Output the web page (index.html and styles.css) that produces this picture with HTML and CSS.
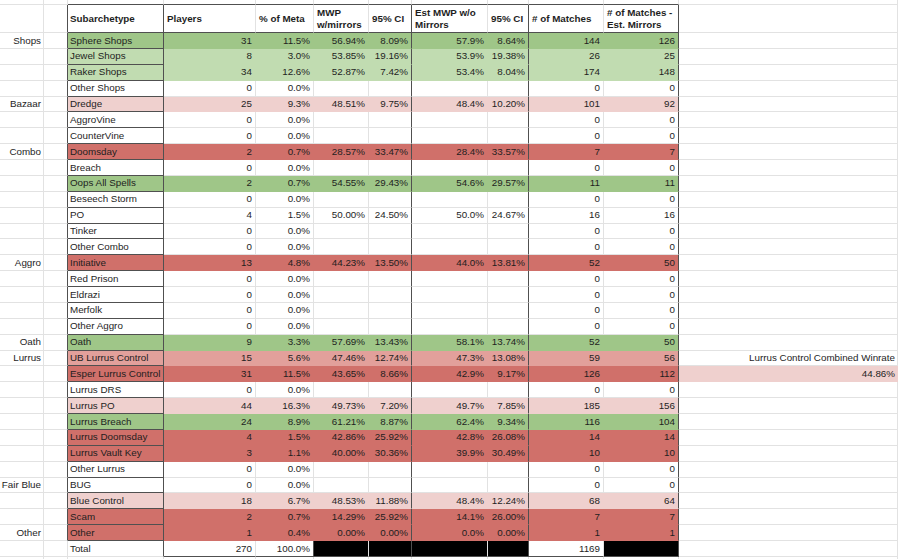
FILE: index.html
```html
<!DOCTYPE html>
<html>
<head>
<meta charset="utf-8">
<title>Subarchetype metagame</title>
<link rel="stylesheet" href="styles.css">
</head>
<body>
<div class="sheet">
  <div class="row top"><div></div><div></div><div></div><div></div><div></div><div></div><div></div><div></div><div></div><div></div><div></div><div></div><div></div></div>
  <div class="row hd"><div></div><div></div><div>Subarchetype</div><div>Players</div><div>% of Meta</div><div>MWP<br>w/mirrors</div><div>95% CI</div><div>Est MWP w/o<br>Mirrors</div><div>95% CI</div><div># of Matches</div><div># of Matches -<br>Est. Mirrors</div><div></div><div></div></div>

  <div class="row d fill green"><div>Shops</div><div></div><div>Sphere Shops</div><div>31</div><div>11.5%</div><div>56.94%</div><div>8.09%</div><div>57.9%</div><div>8.64%</div><div>144</div><div>126</div><div></div><div></div></div>
  <div class="row d fill lgreen"><div></div><div></div><div>Jewel Shops</div><div>8</div><div>3.0%</div><div>53.85%</div><div>19.16%</div><div>53.9%</div><div>19.38%</div><div>26</div><div>25</div><div></div><div></div></div>
  <div class="row d fill lgreen"><div></div><div></div><div>Raker Shops</div><div>34</div><div>12.6%</div><div>52.87%</div><div>7.42%</div><div>53.4%</div><div>8.04%</div><div>174</div><div>148</div><div></div><div></div></div>
  <div class="row d"><div></div><div></div><div>Other Shops</div><div>0</div><div>0.0%</div><div></div><div></div><div></div><div></div><div>0</div><div>0</div><div></div><div></div></div>
  <div class="row d fill lpink"><div>Bazaar</div><div></div><div>Dredge</div><div>25</div><div>9.3%</div><div>48.51%</div><div>9.75%</div><div>48.4%</div><div>10.20%</div><div>101</div><div>92</div><div></div><div></div></div>
  <div class="row d"><div></div><div></div><div>AggroVine</div><div>0</div><div>0.0%</div><div></div><div></div><div></div><div></div><div>0</div><div>0</div><div></div><div></div></div>
  <div class="row d"><div></div><div></div><div>CounterVine</div><div>0</div><div>0.0%</div><div></div><div></div><div></div><div></div><div>0</div><div>0</div><div></div><div></div></div>
  <div class="row d fill red"><div>Combo</div><div></div><div>Doomsday</div><div>2</div><div>0.7%</div><div>28.57%</div><div>33.47%</div><div>28.4%</div><div>33.57%</div><div>7</div><div>7</div><div></div><div></div></div>
  <div class="row d"><div></div><div></div><div>Breach</div><div>0</div><div>0.0%</div><div></div><div></div><div></div><div></div><div>0</div><div>0</div><div></div><div></div></div>
  <div class="row d fill green"><div></div><div></div><div>Oops All Spells</div><div>2</div><div>0.7%</div><div>54.55%</div><div>29.43%</div><div>54.6%</div><div>29.57%</div><div>11</div><div>11</div><div></div><div></div></div>
  <div class="row d"><div></div><div></div><div>Beseech Storm</div><div>0</div><div>0.0%</div><div></div><div></div><div></div><div></div><div>0</div><div>0</div><div></div><div></div></div>
  <div class="row d"><div></div><div></div><div>PO</div><div>4</div><div>1.5%</div><div>50.00%</div><div>24.50%</div><div>50.0%</div><div>24.67%</div><div>16</div><div>16</div><div></div><div></div></div>
  <div class="row d"><div></div><div></div><div>Tinker</div><div>0</div><div>0.0%</div><div></div><div></div><div></div><div></div><div>0</div><div>0</div><div></div><div></div></div>
  <div class="row d"><div></div><div></div><div>Other Combo</div><div>0</div><div>0.0%</div><div></div><div></div><div></div><div></div><div>0</div><div>0</div><div></div><div></div></div>
  <div class="row d fill red"><div>Aggro</div><div></div><div>Initiative</div><div>13</div><div>4.8%</div><div>44.23%</div><div>13.50%</div><div>44.0%</div><div>13.81%</div><div>52</div><div>50</div><div></div><div></div></div>
  <div class="row d"><div></div><div></div><div>Red Prison</div><div>0</div><div>0.0%</div><div></div><div></div><div></div><div></div><div>0</div><div>0</div><div></div><div></div></div>
  <div class="row d"><div></div><div></div><div>Eldrazi</div><div>0</div><div>0.0%</div><div></div><div></div><div></div><div></div><div>0</div><div>0</div><div></div><div></div></div>
  <div class="row d"><div></div><div></div><div>Merfolk</div><div>0</div><div>0.0%</div><div></div><div></div><div></div><div></div><div>0</div><div>0</div><div></div><div></div></div>
  <div class="row d"><div></div><div></div><div>Other Aggro</div><div>0</div><div>0.0%</div><div></div><div></div><div></div><div></div><div>0</div><div>0</div><div></div><div></div></div>
  <div class="row d fill green"><div>Oath</div><div></div><div>Oath</div><div>9</div><div>3.3%</div><div>57.69%</div><div>13.43%</div><div>58.1%</div><div>13.74%</div><div>52</div><div>50</div><div></div><div></div></div>
  <div class="row d fill mpink"><div>Lurrus</div><div></div><div>UB Lurrus Control</div><div>15</div><div>5.6%</div><div>47.46%</div><div>12.74%</div><div>47.3%</div><div>13.08%</div><div>59</div><div>56</div><div>Lurrus Control Combined Winrate</div><div></div></div>
  <div class="row d fill red"><div></div><div></div><div>Esper Lurrus Control</div><div>31</div><div>11.5%</div><div>43.65%</div><div>8.66%</div><div>42.9%</div><div>9.17%</div><div>126</div><div>112</div><div class="note">44.86%</div><div></div></div>
  <div class="row d"><div></div><div></div><div>Lurrus DRS</div><div>0</div><div>0.0%</div><div></div><div></div><div></div><div></div><div>0</div><div>0</div><div></div><div></div></div>
  <div class="row d fill lpink"><div></div><div></div><div>Lurrus PO</div><div>44</div><div>16.3%</div><div>49.73%</div><div>7.20%</div><div>49.7%</div><div>7.85%</div><div>185</div><div>156</div><div></div><div></div></div>
  <div class="row d fill green"><div></div><div></div><div>Lurrus Breach</div><div>24</div><div>8.9%</div><div>61.21%</div><div>8.87%</div><div>62.4%</div><div>9.34%</div><div>116</div><div>104</div><div></div><div></div></div>
  <div class="row d fill red"><div></div><div></div><div>Lurrus Doomsday</div><div>4</div><div>1.5%</div><div>42.86%</div><div>25.92%</div><div>42.8%</div><div>26.08%</div><div>14</div><div>14</div><div></div><div></div></div>
  <div class="row d fill red"><div></div><div></div><div>Lurrus Vault Key</div><div>3</div><div>1.1%</div><div>40.00%</div><div>30.36%</div><div>39.9%</div><div>30.49%</div><div>10</div><div>10</div><div></div><div></div></div>
  <div class="row d"><div></div><div></div><div>Other Lurrus</div><div>0</div><div>0.0%</div><div></div><div></div><div></div><div></div><div>0</div><div>0</div><div></div><div></div></div>
  <div class="row d"><div>Fair Blue</div><div></div><div>BUG</div><div>0</div><div>0.0%</div><div></div><div></div><div></div><div></div><div>0</div><div>0</div><div></div><div></div></div>
  <div class="row d fill lpink"><div></div><div></div><div>Blue Control</div><div>18</div><div>6.7%</div><div>48.53%</div><div>11.88%</div><div>48.4%</div><div>12.24%</div><div>68</div><div>64</div><div></div><div></div></div>
  <div class="row d fill red"><div></div><div></div><div>Scam</div><div>2</div><div>0.7%</div><div>14.29%</div><div>25.92%</div><div>14.1%</div><div>26.00%</div><div>7</div><div>7</div><div></div><div></div></div>
  <div class="row d fill red"><div>Other</div><div></div><div>Other</div><div>1</div><div>0.4%</div><div>0.00%</div><div>0.00%</div><div>0.0%</div><div>0.00%</div><div>1</div><div>1</div><div></div><div></div></div>
  <div class="row tot"><div></div><div></div><div>Total</div><div>270</div><div>100.0%</div><div class="blk"></div><div class="blk"></div><div class="blk"></div><div class="blk"></div><div>1169</div><div class="blk"></div><div></div><div></div></div>
  <div class="row end"><div></div><div></div><div></div><div></div><div></div><div></div><div></div><div></div><div></div><div></div><div></div><div></div><div></div></div>
</div>
</body>
</html>
```

FILE: styles.css
```css
:root {
  --grid: #e2e2e2;
  --dark: #505050;
}

html, body {
  margin: 0;
  padding: 0;
  background: #ffffff;
}

.sheet {
  display: grid;
  grid-template-columns: 44px 24px 96px 92px 58px 55px 43px 76px 41px 75px 75px 219px 2px;
  grid-template-rows: 5px 28px repeat(33, 15.875px) 3px;
  width: 900px;
  height: 559px;
  overflow: hidden;
}

.row {
  display: contents;
}

.row > * {
  box-sizing: border-box;
  border-right: 1px solid var(--grid);
  border-bottom: 1px solid var(--grid);
  display: flex;
  align-items: center;
  justify-content: flex-end;
  padding: 0 3px 0 2px;
  overflow: hidden;
  white-space: nowrap;
  font: 9.8px/1 "Liberation Sans", Arial, sans-serif;
  color: #1e1e1e;
}

.row > :nth-child(1) {
  padding-right: 2px;
}

.row > :nth-child(3) {
  justify-content: flex-start;
  padding-left: 2px;
  padding-right: 0;
}

.row > :nth-child(12) {
  padding-right: 2px;
}

.row > :nth-child(13) {
  border: 0;
  padding: 0;
}

/* header */
.hd > * {
  justify-content: flex-start;
  white-space: normal;
  font-weight: bold;
  line-height: 11.5px;
  padding: 0 2px 0 3px;
}

/* colored conditional-format fills */
.green { --c: #9fc688; }
.lgreen { --c: #c1dcb1; }
.red { --c: #d0706a; }
.mpink { --c: #e2a09b; }
.lpink { --c: #efd0ce; }

.fill > :nth-child(n+3):nth-child(-n+11) {
  background: var(--c);
}

.fill > :nth-child(n+4):nth-child(-n+11) {
  border-bottom-color: transparent;
}

.fill > :nth-child(4),
.fill > :nth-child(5),
.fill > :nth-child(6),
.fill > :nth-child(8),
.fill > :nth-child(10) {
  border-right-color: transparent;
}

.note {
  background: #efd0ce;
  border-color: transparent !important;
}

/* table outline */
.top > :nth-child(n+3):nth-child(-n+11),
.hd > :nth-child(n+3):nth-child(-n+11),
.tot > :nth-child(n+4):nth-child(-n+11),
.d > :nth-child(3) {
  border-bottom-color: var(--dark);
}

.hd > :nth-child(2),
.d > :nth-child(2),
.hd > :nth-child(3),
.d > :nth-child(3),
.tot > :nth-child(3),
.hd > :nth-child(7),
.d > :nth-child(7),
.tot > :nth-child(7),
.hd > :nth-child(9),
.d > :nth-child(9),
.tot > :nth-child(9),
.hd > :nth-child(11),
.d > :nth-child(11),
.tot > :nth-child(11),
.tot > :nth-child(5) {
  border-right-color: var(--dark);
}

.blk {
  background: #000000;
}
```
